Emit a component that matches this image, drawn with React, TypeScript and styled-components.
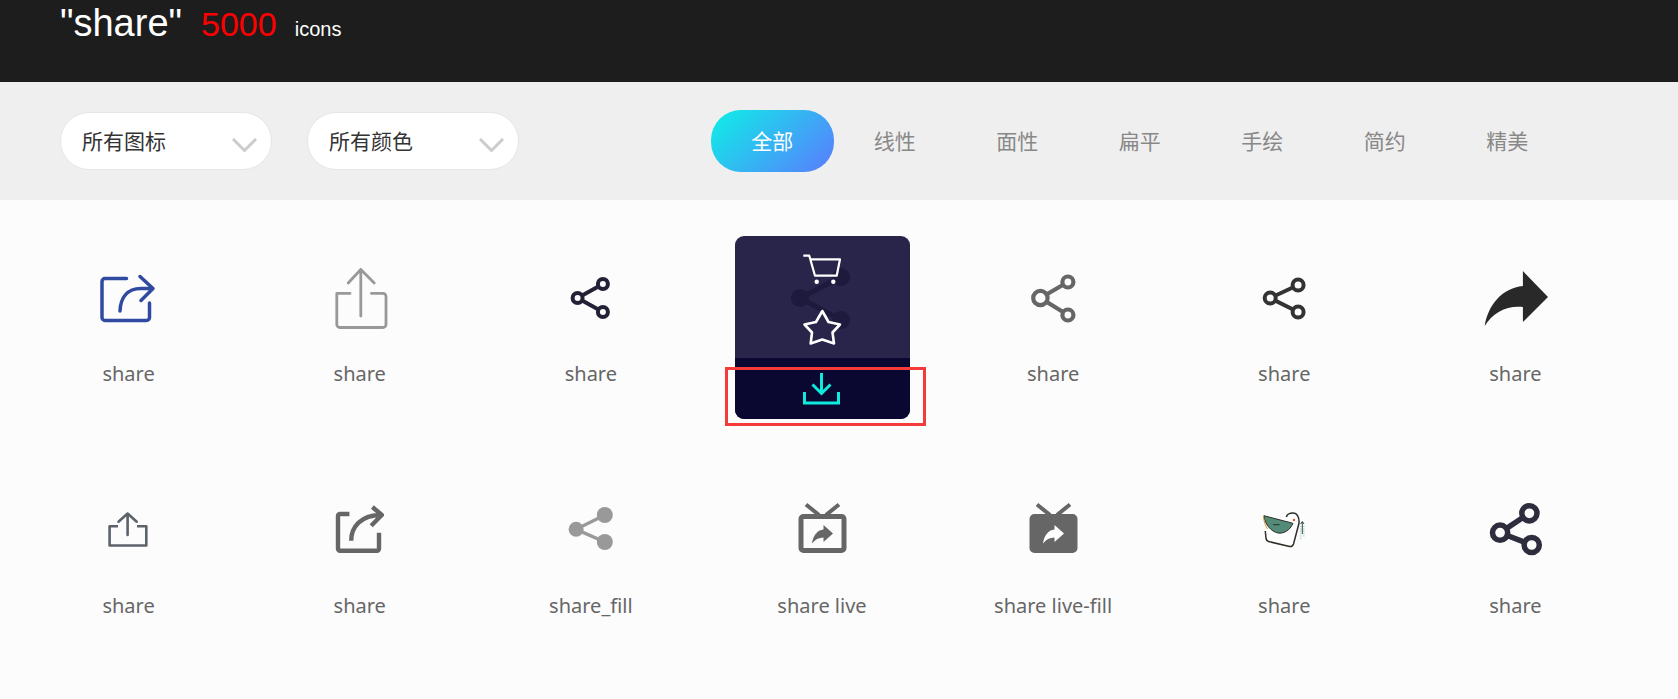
import styled, { createGlobalStyle } from "styled-components";
import type { ReactNode } from "react";

const GlobalStyle = createGlobalStyle`
  html, body {
    margin: 0;
    padding: 0;
    background: #fcfcfc;
    font-family: "Noto Sans", "Noto Sans CJK SC", sans-serif;
  }
`;

const Page = styled.div`
  height: 699px;
  overflow: hidden;
  background: #fcfcfc;
`;

const Header = styled.header`
  height: 82px;
  box-sizing: border-box;
  display: flex;
  align-items: baseline;
  padding: 0 0 0 60px;
  background: #1d1d1d;
  color: #fff;
  font-family: "Liberation Sans", sans-serif;
`;

const Query = styled.span`
  font-size: 38px;
  line-height: 46px;
`;

const Total = styled.span`
  margin-left: 19px;
  font-size: 34px;
  line-height: 46px;
  color: #ff0000;
`;

const Unit = styled.span`
  margin-left: 18px;
  font-size: 20px;
`;

const Toolbar = styled.div`
  height: 118px;
  box-sizing: border-box;
  display: flex;
  align-items: center;
  padding-left: 60px;
  background: #efefef;
`;

const Select = styled.div`
  width: 212px;
  height: 58px;
  box-sizing: border-box;
  display: flex;
  align-items: center;
  justify-content: space-between;
  margin-right: 35px;
  padding: 0 14px 2px 21px;
  background: #fff;
  border: 1px solid #e6e6e6;
  border-radius: 29px;
  font-size: 21px;
  color: #333;
`;

const Chevron = styled.svg`
  width: 25px;
  height: 14px;
  margin-top: 10px;
`;

const Tabs = styled.div`
  display: flex;
  margin-left: 157px;
`;

const Tab = styled.div<{ $active?: boolean }>`
  width: 122.5px;
  height: 62px;
  box-sizing: border-box;
  padding-bottom: 3px;
  display: flex;
  align-items: center;
  justify-content: center;
  border-radius: 30px;
  font-size: 21px;
  color: ${(p) => (p.$active ? "#fff" : "#888")};
  background: ${(p) =>
    p.$active ? "linear-gradient(135deg, #0df0e6, #5b7bff)" : "transparent"};
`;

const Grid = styled.main`
  display: grid;
  grid-template-columns: repeat(7, 1fr);
  row-gap: 49px;
  padding: 36px 47px 0 13px;
`;

const Cell = styled.div`
  height: 183px;
  display: flex;
  flex-direction: column;
  align-items: center;
`;

const IconSlot = styled.div`
  height: 122px;
  display: flex;
  align-items: center;
  justify-content: center;
  align-self: stretch;
`;

const Label = styled.div`
  height: 32px;
  line-height: 32px;
  font-size: 20px;
  color: #666;
`;

const Card = styled.div`
  position: relative;
  width: 175px;
  height: 183px;
  margin-left: 1px;
  border-radius: 9px;
  background: #292449;
`;

const CardFoot = styled.div`
  height: 61px;
  display: flex;
  align-items: center;
  justify-content: center;
  border-radius: 0 0 9px 9px;
  background: #0a0830;
`;

const Highlight = styled.div`
  position: absolute;
  left: -10px;
  top: 131px;
  width: 201px;
  height: 59px;
  box-sizing: border-box;
  border: 3px solid #f53a3a;
`;

const Glyph = styled.svg<{ $size?: number }>`
  width: ${(p) => p.$size ?? 80}px;
  height: ${(p) => p.$size ?? 80}px;
  display: block;
  overflow: visible;
`;

function Icon({ children, size = 80 }: { children: ReactNode; size?: number }) {
  return (
    <Glyph $size={size} viewBox={`0 0 ${size} ${size}`} fill="none">
      {children}
    </Glyph>
  );
}

type Pt = [number, number];

// three linked nodes, the usual share mark
function Nodes(props: {
  a: Pt;
  b: Pt;
  c: Pt;
  r: number;
  ra?: number;
  sw: number;
  color: string;
  filled?: boolean;
}) {
  const { a, b, c, r, ra, sw, color, filled } = props;
  return (
    <g stroke={color} strokeWidth={sw}>
      <path d={`M${b[0]} ${b[1]} L${a[0]} ${a[1]} L${c[0]} ${c[1]}`} />
      {[a, b, c].map((p) => (
        <circle
          key={p.join()}
          cx={p[0]}
          cy={p[1]}
          r={p === a && ra ? ra : r}
          fill={filled ? color : "#fcfcfc"}
          stroke={filled ? "none" : color}
        />
      ))}
    </g>
  );
}

function BoxArrow(props: { color: string; sw: number; children: ReactNode }) {
  return (
    <g
      stroke={props.color}
      strokeWidth={props.sw}
      strokeLinecap="round"
      strokeLinejoin="round"
    >
      {props.children}
    </g>
  );
}

function Tv({ filled }: { filled?: boolean }) {
  const arrow =
    "M41.5 36 L51 44.5 L41.5 53 V48.5 C36.5 48.5 33 50.5 30 54.5 C31 47 35 41 41.5 40.5 Z";
  return (
    <g>
      <path d="M24 15.5 L37 26 M57 15.5 L44 26" stroke="#666" strokeWidth="4" />
      <rect
        x="19"
        y="27.5"
        width="43"
        height="34"
        rx="2.5"
        stroke="#666"
        strokeWidth="5"
        fill={filled ? "#666" : "none"}
      />
      <path d={arrow} fill={filled ? "#fff" : "#666"} />
    </g>
  );
}

const icons: { name: string; art?: ReactNode; hover?: boolean }[] = [
  {
    name: "share",
    art: (
      <BoxArrow color="#3049a1" sw={3.5}>
        <path d="M37.5 21.5 H16 a3 3 0 0 0 -3 3 V60.5 a3 3 0 0 0 3 3 H57.5 a3 3 0 0 0 3 -3 V46" />
        <path d="M51 19.5 L64 31.5 L52 43.5 M31 54 C31.5 41 38 31.5 52 31.5 H64" />
      </BoxArrow>
    ),
  },
  {
    name: "share",
    art: (
      <g stroke="#999" strokeWidth="2.8" strokeLinecap="round" strokeLinejoin="round">
        <path d="M30 36.4 H16.8 V67.5 a3 3 0 0 0 3 3 H63 a3 3 0 0 0 3 -3 V39.4 a3 3 0 0 0 -3 -3 H51.5" />
        <path d="M40.8 59 V12.5 M28.2 26 L40.8 12.5 L54.2 26" />
      </g>
    ),
  },
  {
    name: "share",
    art: <Nodes a={[26.6, 41]} b={[51.9, 27]} c={[51.9, 55]} r={5} sw={4} color="#232136" />,
  },
  { name: "share", hover: true },
  {
    name: "share",
    art: <Nodes a={[27.4, 41]} b={[54.9, 25]} c={[54.9, 58]} r={5.5} ra={7.2} sw={4.2} color="#666" />,
  },
  {
    name: "share",
    art: <Nodes a={[26.2, 41]} b={[54.1, 28]} c={[54.1, 55]} r={5.5} sw={4} color="#333" />,
  },
  {
    name: "share",
    art: (
      <path
        d="M47.9 14 L73 40 L47.9 65 V50 C33 48 18 55 9.7 69 C13 48 27 31 47.9 29 Z"
        fill="#292929"
      />
    ),
  },
  {
    name: "share",
    art: (
      <g stroke="#5b636b" strokeWidth="2.6" strokeLinejoin="round">
        <path d="M29 37.2 H20.6 V56.5 H57.3 V37.2 H48" />
        <path d="M38.6 46 V25 M29.5 32.7 L38.6 24.5 L47.7 32.7" strokeLinecap="round" />
      </g>
    ),
  },
  {
    name: "share",
    art: (
      <g stroke="#666" strokeWidth="4.4" strokeLinejoin="round">
        <path d="M29.4 25 H20 a2 2 0 0 0 -2 2 V59.7 a2 2 0 0 0 2 2 H57 a2 2 0 0 0 2 -2 V43.7" />
        <path d="M52.4 18 L61.8 26 L51.2 36.7 M31.2 51.7 C31.2 38 41 26 61 26" />
      </g>
    ),
  },
  {
    name: "share_fill",
    art: <Nodes a={[25.1, 40.3]} b={[53.8, 26]} c={[53.8, 53]} r={8} ra={7.5} sw={3.4} color="#999" filled />,
  },
  { name: "share live", art: <Tv /> },
  { name: "share live-fill", art: <Tv filled /> },
  {
    name: "share",
    art: (
      <g>
        <path
          d="M21.3 42 L22 49.5 Q22.5 52 24.5 52.5 L45.6 57.5 Q48.5 58 49.5 55 L55 34.3 C55.5 28 53 24 49 24 C45.5 24 43 25.5 42.3 28"
          stroke="#2f2f2a"
          strokeWidth="1.5"
          fill="#fff"
        />
        <path
          d="M19.9 26.7 L48.9 34.3 C46 41.5 39.5 45 33.9 44 C27 42.5 21 35.5 19.9 26.7 Z"
          fill="#538b78"
          stroke="#2f2f2a"
          strokeWidth="1"
        />
        <path d="M19.4 27 C20 33 21.5 37 23.5 40" stroke="#d99a2b" strokeWidth="1" />
        <path d="M29 35.7 H35.6" stroke="#22332c" strokeWidth="1" />
        <circle cx="50" cy="31" r="1.2" fill="#d8532f" />
        <path d="M58.3 33 V45" stroke="#2f4a42" strokeWidth="1" />
        <path d="M56.6 35 L58.3 32.5 L60 35" stroke="#2f4a42" strokeWidth="1" />
        <path d="M56.8 37 V51 M59.8 37 V48" stroke="#8cc4b2" strokeWidth="1.2" strokeDasharray="1 1.4" />
      </g>
    ),
  },
  {
    name: "share",
    art: <Nodes a={[25.1, 43.7]} b={[54.4, 24.3]} c={[56.7, 56]} r={7.6} sw={5.5} color="#2d2d3d" />,
  },
];

const tabs = ["全部", "线性", "面性", "扁平", "手绘", "简约", "精美"];
const selects = ["所有图标", "所有颜色"];

function HoverCard() {
  return (
    <Card>
      <IconSlot>
        <Icon size={100}>
          <g transform="translate(10 10)">
            <Nodes a={[18, 41]} b={[59, 20]} c={[59, 63]} r={9} sw={5} color="#1e1a3e" filled />
          </g>
          <path
            d="M31.3 8.7 H37.3 L43 28.7 H64.7 L68 12.3 H38.7"
            stroke="#fff"
            strokeWidth="2.2"
            strokeLinejoin="round"
          />
          <circle cx="44.7" cy="34.7" r="2.2" fill="#fff" />
          <circle cx="61.3" cy="34.7" r="2.2" fill="#fff" />
          <path
            d="M50.3 64 L56.5 75 L68 77.5 L60.5 85.5 L62 96.5 L50.3 92.5 L38.7 96.5 L40 85.5 L32.5 77.5 L44 75 Z"
            fill="#292449"
            stroke="#fff"
            strokeWidth="2.6"
            strokeLinejoin="round"
          />
        </Icon>
      </IconSlot>
      <CardFoot>
        <svg width="40" height="36" viewBox="0 0 40 36" fill="none" stroke="#0eeadb" strokeWidth="3">
          <path d="M19.5 2 V22 M10.5 13.5 L19.5 22.5 L28.5 13.5" />
          <path d="M2.5 21 V32 H36.5 V21" />
        </svg>
      </CardFoot>
      <Highlight />
    </Card>
  );
}

export default function App() {
  return (
    <Page>
      <GlobalStyle />
      <Header>
        <Query>"share"</Query>
        <Total>5000</Total>
        <Unit>icons</Unit>
      </Header>
      <Toolbar>
        {selects.map((s) => (
          <Select key={s}>
            {s}
            <Chevron viewBox="0 0 25 14" fill="none" stroke="#ccc" strokeWidth="3">
              <path d="M1 1 L12.5 12.5 L24 1" />
            </Chevron>
          </Select>
        ))}
        <Tabs>
          {tabs.map((t, i) => (
            <Tab key={t} $active={i === 0}>
              {t}
            </Tab>
          ))}
        </Tabs>
      </Toolbar>
      <Grid>
        {icons.map((item, i) =>
          item.hover ? (
            <Cell key={i}>
              <HoverCard />
            </Cell>
          ) : (
            <Cell key={i}>
              <IconSlot>
                <Icon>{item.art}</Icon>
              </IconSlot>
              <Label>{item.name}</Label>
            </Cell>
          )
        )}
      </Grid>
    </Page>
  );
}
